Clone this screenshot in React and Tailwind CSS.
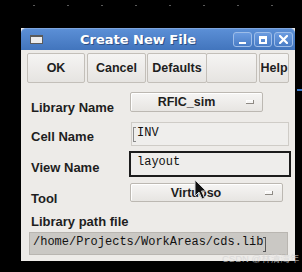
import React from "react";

const sans = { fontFamily: '"Liberation Sans", Arial, sans-serif' };
const mono = { fontFamily: '"Liberation Mono", "Courier New", monospace' };

function Label({ children, mt }) {
  return (
    <div
      className={`w-[99px] shrink-0 text-[13px] font-bold leading-[16px] text-[#1e1e1e] ${mt}`}
      style={sans}
    >
      {children}
    </div>
  );
}

function Combo({ text, w, h, mr }) {
  return (
    <div
      className={`${w} ${h} flex items-center rounded-[2px] border border-[#bcb8b2] bg-gradient-to-b from-[#f6f5f4] to-[#e7e5e2] shadow-[inset_1px_1px_0_#ffffff]`}
    >
      <div
        className="flex-1 text-center text-[12.5px] font-bold leading-[16px] text-[#1e1e1e]"
        style={sans}
      >
        {text}
      </div>
      <div
        className={`ml-[4px] ${mr} h-[4px] w-[8px] border-b border-r border-[#8e8a84] bg-[#f7f6f5] shadow-[inset_1px_1px_0_#ffffff]`}
      />
    </div>
  );
}

function Btn({ children, w, className = "" }) {
  return (
    <div
      className={`${w} h-[30px] flex items-center justify-center rounded-[2px] border border-[#c3bfb9] bg-gradient-to-b from-[#f5f4f3] to-[#e6e4e1] text-[12.5px] font-bold text-[#1e1e1e] ${className}`}
      style={sans}
    >
      {children}
    </div>
  );
}

export default function App() {
  return (
    <div className="relative h-[272px] w-[302px] overflow-hidden bg-black">
      {/* desktop dots */}
      <div className="flex h-[28px] gap-[32px] pl-[33px] pt-[5px]">
        {Array.from({ length: 8 }).map((_, i) => (
          <div key={i} className="h-[1px] w-[2px] bg-[#5a5a5a]" />
        ))}
      </div>

      {/* window */}
      <div className="ml-[21px] flex h-[233px] w-[274px] flex-col bg-[#edebe8]">
        {/* title bar */}
        <div className="flex h-[22px] items-center rounded-t-[5px] border-t border-[#7ea5de] bg-gradient-to-b from-[#5b8fd6] to-[#4275bd] pl-[9px] pr-[2px]">
          <div className="h-[9px] w-[13px] border border-t-2 border-[#5b5b5b] bg-[#ececec]" />
          <div
            className="flex-1 text-center text-[13px] font-bold leading-[16px] text-white [text-shadow:1px_1px_0_#2c4f86]"
            style={{ fontFamily: '"DejaVu Sans", sans-serif' }}
          >
            Create New File
          </div>
          <div className="flex gap-[2px]">
            <div className="flex h-[15px] w-[19px] items-end justify-center rounded-[3px] border border-[#9dbde9] bg-gradient-to-b from-[#6a9be0] to-[#4a7dc6] pb-[2px]">
              <div className="h-[2px] w-[7px] bg-white" />
            </div>
            <div className="flex h-[15px] w-[18px] items-center justify-center rounded-[3px] border border-[#9dbde9] bg-gradient-to-b from-[#6a9be0] to-[#4a7dc6]">
              <div className="h-[8px] w-[8px] border-2 border-t-[3px] border-white" />
            </div>
            <div className="flex h-[15px] w-[19px] items-center justify-center rounded-[3px] border border-[#9dbde9] bg-gradient-to-b from-[#6a9be0] to-[#4a7dc6]">
              <svg width="9" height="9" viewBox="0 0 9 9">
                <path d="M1 1 L8 8 M8 1 L1 8" stroke="white" strokeWidth="2.2" strokeLinecap="square" />
              </svg>
            </div>
          </div>
        </div>

        {/* button row */}
        <div className="flex pl-[6px] pt-[3px]">
          <Btn w="w-[58px]">OK</Btn>
          <Btn w="w-[59px]" className="ml-[2px]">Cancel</Btn>
          <Btn w="w-[60px]" className="ml-[1px]">Defaults</Btn>
          <Btn w="w-[51px]" className="-ml-[1px]"> </Btn>
          <Btn w="w-[30px]" className="ml-[2px]">Help</Btn>
        </div>

        {/* Library Name */}
        <div className="mt-[9px] flex items-start pl-[10px]">
          <Label mt="mt-[8px]">Library Name</Label>
          <Combo text="RFIC_sim" w="w-[133px]" h="h-[20px]" mr="mr-[8px]" />
        </div>

        {/* Cell Name */}
        <div className="mt-[6px] flex items-start pl-[10px]">
          <Label mt="mt-[7px]">Cell Name</Label>
          <div className="ml-[1px] flex h-[24px] w-[158px] items-start border border-[#cfccc7] bg-[#efeeec] pl-[1px] pt-[2px]">
            <div className="mt-[2px] h-[15px] w-[3px] border-y border-l border-[#8a8a8a]" />
            <span className="ml-[1px] text-[12px] leading-[16px] text-[#111]" style={mono}>
              INV
            </span>
          </div>
        </div>

        {/* View Name */}
        <div className="mt-[5px] flex items-start pl-[10px]">
          <Label mt="mt-[9px]">View Name</Label>
          <div className="-ml-[1px] flex h-[26px] w-[162px] items-start border-2 border-[#1c1c1c] bg-[#eeedeb] pl-[6px] pt-[1px]">
            <span className="text-[12px] leading-[16px] text-[#111]" style={mono}>
              layout
            </span>
          </div>
        </div>

        {/* Tool */}
        <div className="mt-[6px] flex items-start pl-[10px]">
          <Label mt="mt-[8px]">Tool</Label>
          <Combo text="Virtuoso" w="w-[153px]" h="h-[19px]" mr="mr-[9px]" />
        </div>

        {/* Library path file */}
        <div className="mt-[7px] pl-[10px]">
          <div className="text-[13px] font-bold leading-[16px] text-[#1e1e1e]" style={sans}>
            Library path file
          </div>
        </div>
        <div className="mt-[2px] pl-[8px]">
          <div className="flex h-[23px] w-[259px] items-start border border-[#b9b6b1] bg-[#cac8c4] pl-[3px] pt-[1px]">
            <span className="text-[12px] leading-[16px] text-[#111]" style={mono}>
              /home/Projects/WorkAreas/cds.lib
            </span>
            <div className="mt-[3px] h-[15px] w-[3px] border-y border-r border-[#555]" />
          </div>
        </div>
      </div>

      {/* stray blue line on the desktop */}
      <div className="absolute left-[297px] top-[89px] h-[2px] w-[5px] bg-[#3a78c8]" />

      {/* mouse cursor */}
      <svg className="absolute left-[194px] top-[179px]" width="13" height="22" viewBox="0 0 13 22">
        <path
          d="M1 1 L1 17 L5 13 L8 20 L10.5 19 L7.5 12 L12 12 Z"
          fill="#111"
          stroke="#d8d8d8"
          strokeWidth="1"
          strokeLinejoin="round"
        />
      </svg>

      {/* watermark */}
      <div
        className="absolute left-[222px] top-[253px] whitespace-nowrap text-[9.5px] leading-[12px] text-[#d4d4d4] opacity-70"
        style={{ fontFamily: '"Liberation Sans", "Noto Sans CJK SC", sans-serif' }}
      >
        CSDN @林清湾年
      </div>
    </div>
  );
}
